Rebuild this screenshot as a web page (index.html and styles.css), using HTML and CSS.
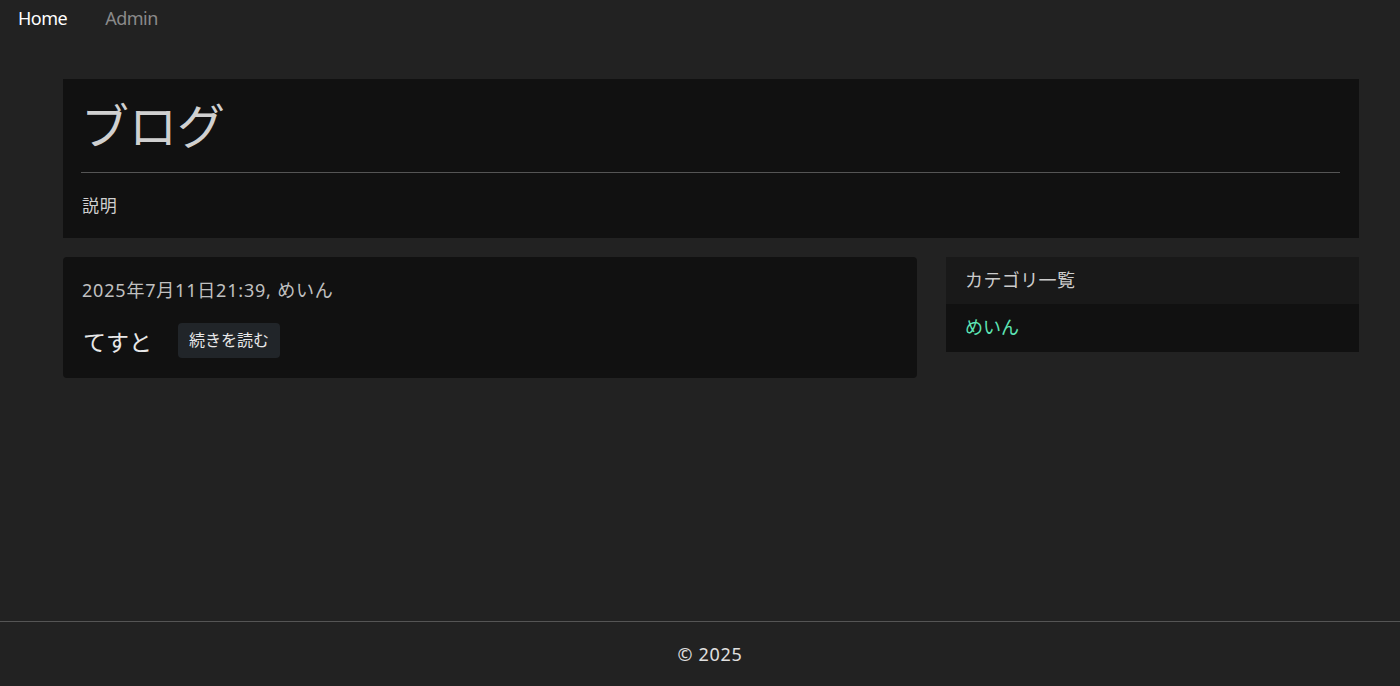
FILE: index.html
```html
<!DOCTYPE html>
<html lang="ja">
<head>
<meta charset="utf-8">
<title>ブログ</title>
<link rel="stylesheet" href="styles.css">
</head>
<body>
<div class="page">
  <nav class="nav">
    <a class="nav-link active" href="#">Home</a>
    <a class="nav-link" href="#">Admin</a>
  </nav>
  <main class="container">
    <section class="jumbo">
      <h1 class="jumbo-title">ブログ</h1>
      <hr class="jumbo-rule">
      <p class="jumbo-desc">説明</p>
    </section>
    <div class="row">
      <div class="posts">
        <article class="post">
          <div class="post-meta">2025年7月11日21:39, めいん</div>
          <div class="post-head">
            <span class="post-title">てすと</span>
            <a class="btn" href="#">続きを読む</a>
          </div>
        </article>
      </div>
      <aside class="side">
        <div class="side-head">カテゴリ一覧</div>
        <div class="side-body"><a class="cat" href="#">めいん</a></div>
      </aside>
    </div>
  </main>
  <footer class="footer">© 2025</footer>
</div>
</body>
</html>
```
FILE: styles.css
```css
* { box-sizing: border-box; }
html, body { margin: 0; padding: 0; }
body {
  background: #222222;
  color: #dddddd;
  font-family: "Noto Sans", "Noto Sans CJK JP", sans-serif;
}
.page {
  min-height: 686px;
  display: flex;
  flex-direction: column;
}
.nav {
  display: flex;
  gap: 38px;
  padding: 6px 18px 0;
  height: 40px;
}
.nav-link {
  font-size: 18px;
  color: #8a8a8a;
  text-decoration: none;
  letter-spacing: -0.5px;
}
.nav-link.active { color: #ffffff; }
.container {
  width: 1296px;
  margin: 39px 0 0 63px;
  flex: 1;
}
.jumbo {
  background: #111111;
  padding: 16px 19px 17px 18px;
}
.jumbo-title {
  margin: 0;
  font-size: 48px;
  font-weight: 400;
  color: #d0d0d0;
  line-height: 60px;
  padding-top: 1px;
  height: 62px;
}
.jumbo-rule {
  border: 0;
  border-top: 1px solid #555555;
  margin: 15px 0 18px;
}
.jumbo-desc {
  margin: 0;
  font-size: 17px;
  letter-spacing: 0.8px;
  color: #d0d0d0;
  line-height: 30px;
  padding-left: 1px;
}
.row {
  display: grid;
  grid-template-columns: 854px 413px;
  column-gap: 29px;
  margin-top: 19px;
  align-items: start;
}
.post {
  background: #111111;
  border-radius: 4px;
  padding: 20px 19px 20px;
}
.post-meta {
  font-size: 18px;
  letter-spacing: 0.8px;
  color: #c0c0c0;
  line-height: 27px;
}
.post-head {
  display: flex;
  align-items: center;
  gap: 26px;
  margin-top: 19px;
}
.post-title {
  font-size: 23px;
  color: #e8e8e8;
  padding-left: 1px;
}
.btn {
  background: #212529;
  color: #e8e8e8;
  font-size: 16px;
  text-decoration: none;
  padding: 0 11px;
  height: 35px;
  line-height: 35px;
  border-radius: 4px;
}
.side { background: #111111; }
.side-head {
  background: #191919;
  height: 47px;
  line-height: 47px;
  padding: 0 19px;
  font-size: 18px;
  letter-spacing: 0.4px;
  color: #cccccc;
}
.side-body {
  height: 48px;
  line-height: 46px;
  padding: 0 19px;
}
.cat {
  color: #5ee6b6;
  font-size: 18px;
  text-decoration: none;
}
.footer {
  border-top: 1px solid #555555;
  height: 65px;
  line-height: 64px;
  text-align: center;
  font-size: 18px;
  letter-spacing: 0.7px;
  color: #e0e0e0;
  padding-left: 20px;
}
```
